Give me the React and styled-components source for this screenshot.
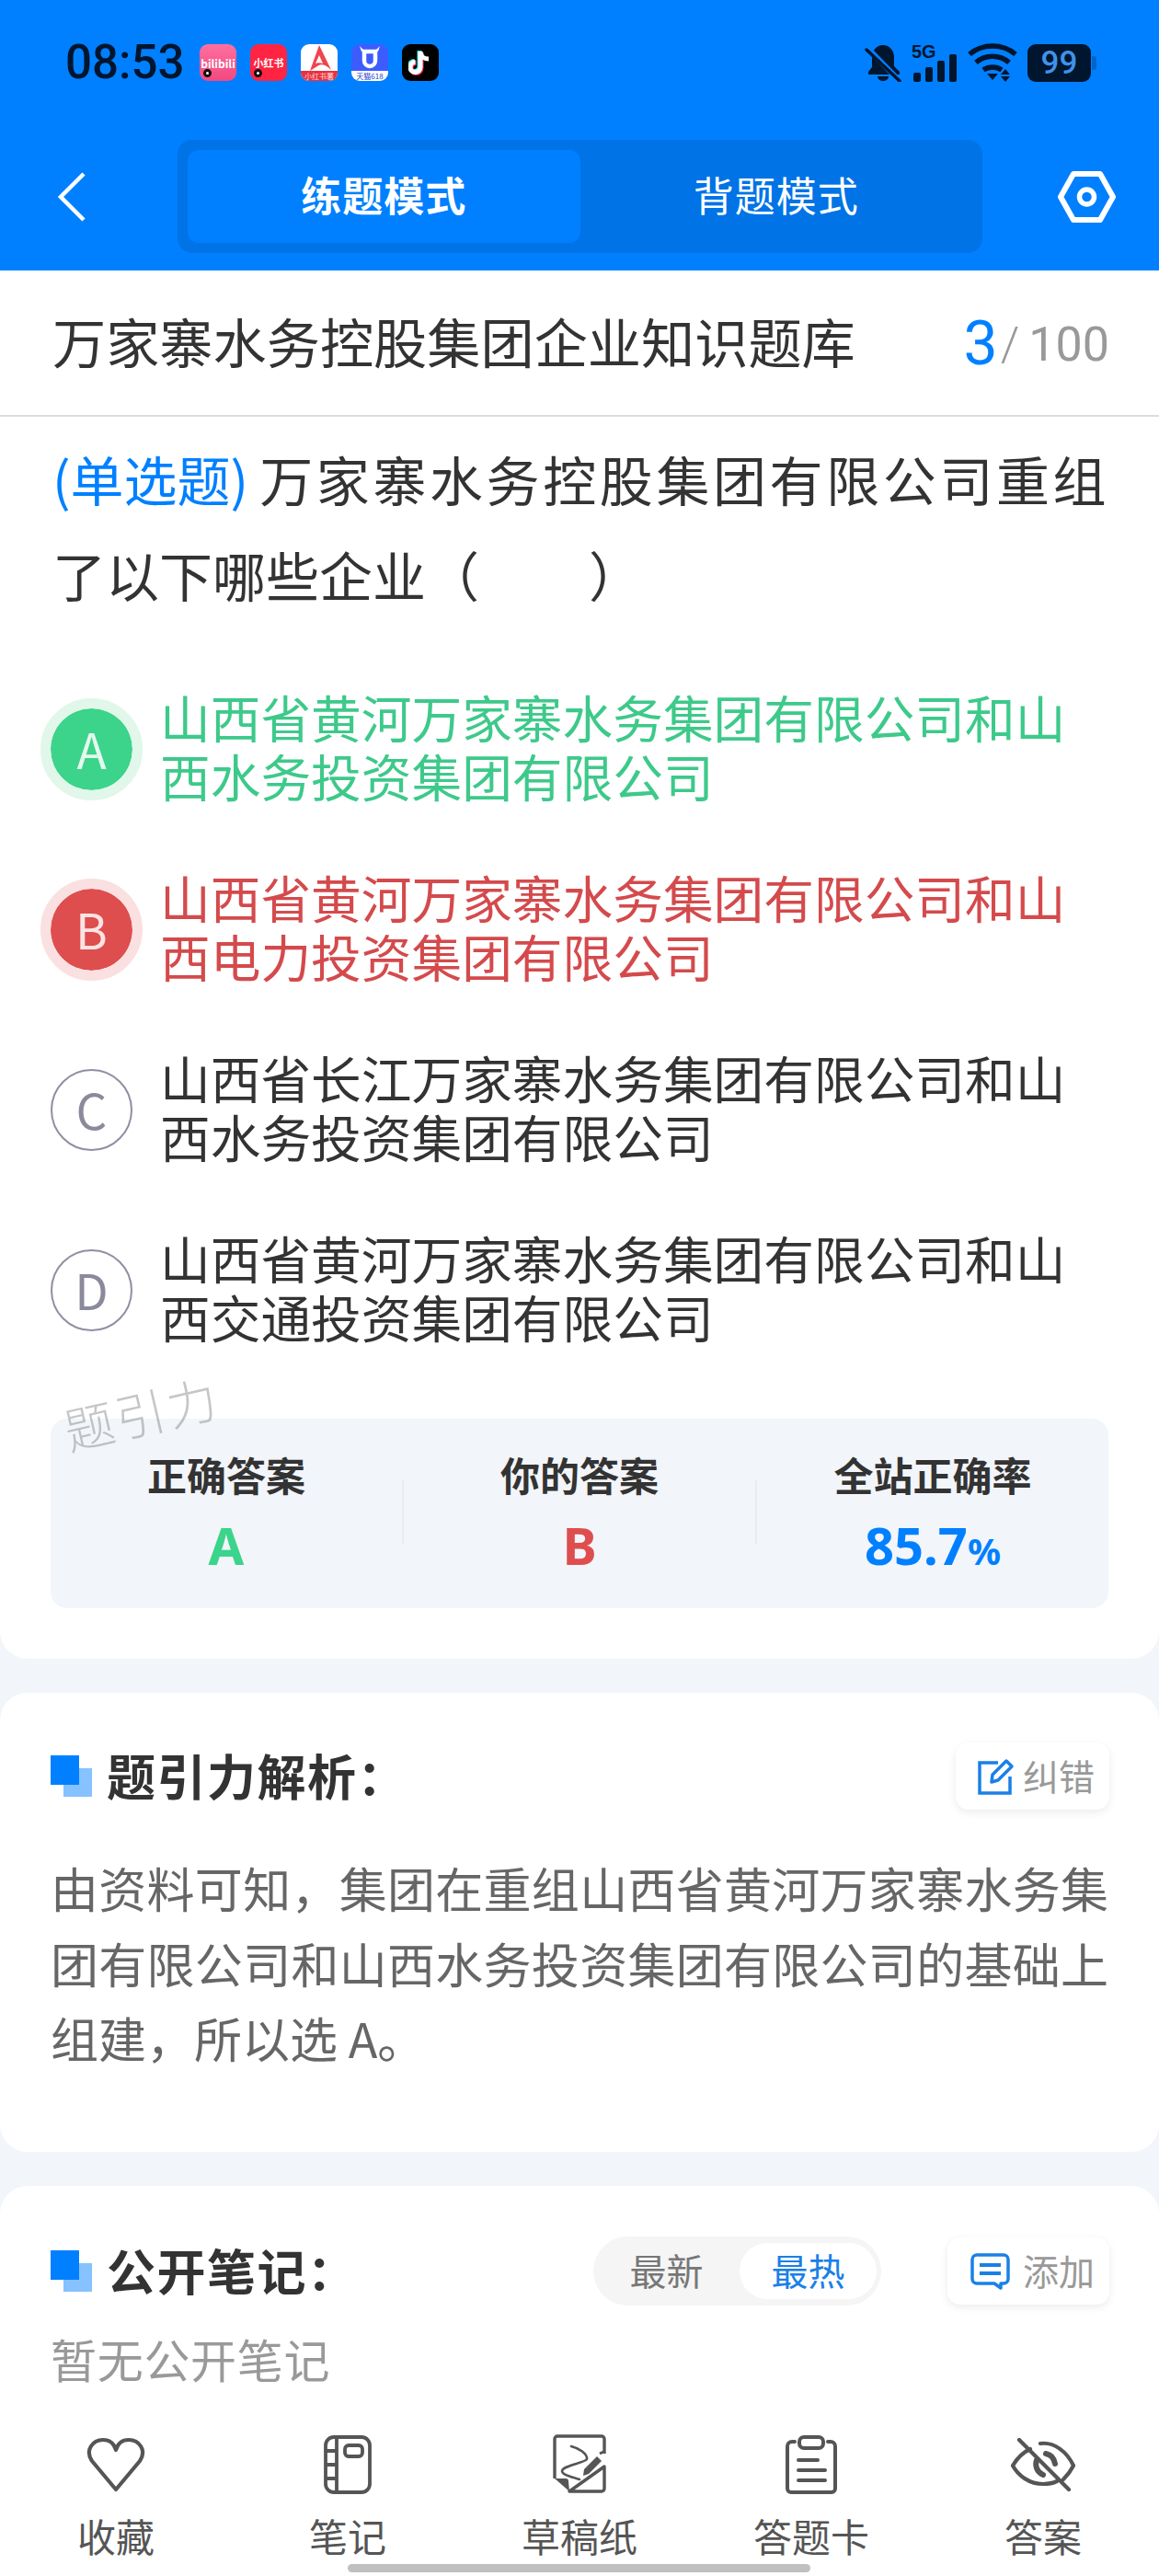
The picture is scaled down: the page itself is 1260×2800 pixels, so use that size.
import React from 'react'
import styled, { createGlobalStyle } from 'styled-components'

const FONT = `"Noto Sans CJK SC", "Noto Sans", sans-serif`
const BLUE = '#0080ff'
const GREEN = '#3bd48a'
const RED = '#de4e4f'
const STATUS_DARK = '#00152e'

const Global = createGlobalStyle`
  html, body { margin: 0; padding: 0; background: #f2f5f9; }
  * { box-sizing: border-box; }
`

const Page = styled.div`
  width: 1260px;
  height: 2800px;
  position: relative;
  overflow: hidden;
  display: flex;
  flex-direction: column;
  background: #f2f5f9;
  font-family: ${FONT};
  color: #333;
`

const Header = styled.header`
  height: 294px;
  background: ${BLUE};
  flex-shrink: 0;
`

const StatusBar = styled.div`
  height: 136px;
  padding: 0 74px 0 71px;
  display: flex;
  align-items: center;
  justify-content: space-between;
`

const StatusLeft = styled.div`
  display: flex;
  align-items: center;
`

const Time = styled.div`
  font-family: Roboto, sans-serif;
  font-size: 51px;
  font-weight: 500;
  color: ${STATUS_DARK};
  line-height: 50px;
  width: 146px;
`

const AppIcons = styled.div`
  display: flex;
  gap: 15px;
`

const AppIcon = styled.div`
  width: 40px;
  height: 40px;
  border-radius: 9px;
  position: relative;
  overflow: hidden;
  display: flex;
  align-items: center;
  justify-content: center;
  background: ${p => p.$bg};
  color: #fff;
  font-size: ${p => p.$size || 11}px;
  font-weight: 700;
  white-space: nowrap;
`

const Dot = styled.span`
  position: absolute;
  left: 4px;
  bottom: 4px;
  width: 9px;
  height: 9px;
  border-radius: 50%;
  border: 3px solid #111;
  background: #fff;
`

const AppStrip = styled.span`
  position: absolute;
  left: 0;
  right: 0;
  bottom: 0;
  height: 11px;
  line-height: 11px;
  text-align: center;
  font-size: 8px;
  font-weight: 400;
  background: ${p => p.$bg};
  color: ${p => p.$color};
`

const StatusRight = styled.div`
  display: flex;
  align-items: center;
  gap: 11px;
`

const SignalBox = styled.div`
  position: relative;
  width: 50px;
  height: 41px;
`

const FiveG = styled.span`
  position: absolute;
  left: 0;
  top: -3px;
  font-family: "Liberation Sans", sans-serif;
  font-size: 20px;
  line-height: 22px;
  font-weight: 700;
  color: ${STATUS_DARK};
`

const Battery = styled.div`
  width: 69px;
  height: 41px;
  border-radius: 9px;
  background: ${STATUS_DARK};
  color: #3f92ea;
  font-family: Roboto, sans-serif;
  font-size: 35px;
  font-weight: 500;
  line-height: 41px;
  text-align: center;
  position: relative;

  &::after {
    content: '';
    position: absolute;
    right: -6px;
    top: 13px;
    width: 5px;
    height: 15px;
    border-radius: 0 3px 3px 0;
    background: #0066cc;
  }
`

const Toolbar = styled.div`
  display: flex;
  align-items: center;
  justify-content: space-between;
  padding: 16px 47px 0 62px;
`

const ModeSwitch = styled.div`
  width: 875px;
  height: 123px;
  padding: 11px;
  border-radius: 16px;
  background: #0073e6;
  display: flex;
  margin-left: 17px;
`

const ModeTab = styled.div`
  flex: 1;
  border-radius: 12px;
  padding-bottom: 5px;
  display: flex;
  align-items: center;
  justify-content: center;
  background: ${p => (p.$active ? BLUE : 'transparent')};
  color: #fff;
  font-size: 44px;
  font-weight: ${p => (p.$active ? 700 : 400)};
  letter-spacing: 1px;
`

const WhiteCard = styled.section`
  background: #fff;
  border-radius: ${p => p.$radius || '30px'};
  flex-shrink: 0;
`

const QuestionCard = styled(WhiteCard)`
  height: 1509px;
`

const TitleRow = styled.div`
  height: 159px;
  padding: 0 54px 6px 57px;
  border-bottom: 2px solid #dcdcdc;
  display: flex;
  align-items: center;
  justify-content: space-between;
`

const BankTitle = styled.div`
  font-size: 58.2px;
  color: #333;
  white-space: nowrap;
`

const Progress = styled.div`
  display: flex;
  align-items: baseline;
  color: #999;
  font-family: Roboto, sans-serif;
  font-size: 52px;
`

const ProgressNow = styled.span`
  font-size: 66px;
  color: ${BLUE};
  transform: translate(1px, 4px);
`

const ProgressSlash = styled.span`
  margin: 0 10px 0 4px;
  font-weight: 300;
`

const Question = styled.div`
  margin: 15px 0 0;
  padding: 0 54px 0 57px;
  font-size: 58px;
  line-height: 104px;
  color: #333;
`

const QuestionLine = styled.div`
  white-space: nowrap;
  letter-spacing: ${p => (p.$spread ? '3.6px' : '0')};
`

const QuestionType = styled.span`
  color: ${BLUE};
  letter-spacing: 0;
  margin-right: 12px;
`

const Blank = styled.span`
  display: inline-block;
  width: 119px;
`

const Options = styled.div`
  margin-top: 74px;
  display: flex;
  flex-direction: column;
  gap: 68px;
`

const OptionRow = styled.div`
  display: flex;
  align-items: center;
  padding: 0 40px 0 44px;
  height: 128px;
  gap: 19px;
`

const COLORS = { right: GREEN, wrong: RED }
const TEXT_COLORS = { right: '#3dc98a', wrong: '#d44a4c' }
const RINGS = { right: '#e0f7ea', wrong: '#fae0e0' }
const LETTERS = { right: '#e4f9ee', wrong: '#fbe3e3' }

const OptionBadge = styled.div`
  width: ${p => (p.$state ? 111 : 89)}px;
  height: ${p => (p.$state ? 111 : 89)}px;
  margin: 0 ${p => (p.$state ? 0 : 11)}px;
  flex-shrink: 0;
  padding-bottom: 3px;
  border-radius: 50%;
  display: flex;
  align-items: center;
  justify-content: center;
  font-size: 53px;
  font-weight: 400;
  color: ${p => LETTERS[p.$state] || '#8a8a9c'};
  background: ${p => COLORS[p.$state] || 'transparent'};
  background-clip: padding-box;
  border: ${p => (p.$state ? `11px solid ${RINGS[p.$state]}` : '2.5px solid #8f8fa3')};
`

const OptionText = styled.div`
  font-size: 54.7px;
  line-height: 64px;
  margin-top: -6px;
  color: ${p => TEXT_COLORS[p.$state] || '#333'};
  width: 990px;
`

const Watermark = styled.div`
  position: absolute;
  left: 68px;
  top: 1495px;
  font-size: 54px;
  font-weight: 300;
  letter-spacing: 3px;
  color: rgba(120, 120, 120, 0.42);
  transform: rotate(-13deg);
  white-space: nowrap;
`

const Stats = styled.div`
  margin: 76px 55px 0;
  height: 206px;
  border-radius: 18px;
  background: #f2f5f9;
  display: flex;
`

const Stat = styled.div`
  flex: 1;
  padding-top: 37px;
  display: flex;
  flex-direction: column;
  align-items: center;
`

const StatLabel = styled.div`
  font-size: 43px;
  line-height: 46px;
  font-weight: 700;
  color: #333;
`

const StatValue = styled.div`
  margin-top: 26px;
  font-family: "Noto Sans", sans-serif;
  font-size: 56px;
  line-height: 56px;
  font-weight: 700;
  color: ${p => p.$color};
`

const Percent = styled.span`
  font-size: 40px;
`

const StatDivider = styled.div`
  width: 2px;
  height: 70px;
  margin-top: 67px;
  background: #e9edf2;
`

const AnalysisCard = styled(WhiteCard)`
  margin-top: 37px;
  height: 499px;
  padding: 54px 54px 0 55px;
`

const NotesCard = styled(WhiteCard)`
  margin-top: 37px;
  flex: 1;
  min-height: 0;
  padding: 55px 54px 0 55px;
`

const SectionHead = styled.div`
  display: flex;
  align-items: center;
  height: ${p => p.$h}px;
`

const SectionMark = styled.div`
  width: 45px;
  height: 45px;
  flex-shrink: 0;
  margin-right: 16px;
  background: linear-gradient(${BLUE}, ${BLUE}) 0 0 / 31px 32px no-repeat,
    linear-gradient(#85c2ff, #85c2ff) 14px 14px / 31px 31px no-repeat;
`

const SectionTitle = styled.div`
  font-size: 53px;
  font-weight: 700;
  color: #333;
  letter-spacing: 1.5px;
  padding-bottom: 4px;
  flex: 1;
`

const ActionButton = styled.div`
  height: ${p => p.$h}px;
  padding: 0 16px 0 ${p => p.$pl}px;
  border-radius: 14px;
  background: #fff;
  box-shadow: 0 3px 10px rgba(0, 0, 0, 0.08);
  display: flex;
  align-items: center;
  gap: ${p => p.$gap}px;
  font-size: 39px;
  line-height: 48px;
  color: #999;
`

const ActionLabel = styled.span`
  margin: -3px 0 0 0;
`

const SortSwitch = styled.div`
  width: 313px;
  height: 75px;
  margin-right: 72px;
  padding: 7px 5px 7px 0;
  border-radius: 38px;
  background: #f5f5f5;
  display: flex;
  align-items: center;
  font-size: 40px;
  color: #777;
`

const SortOption = styled.div`
  height: 61px;
  padding-bottom: 4px;
  display: flex;
  align-items: center;
  justify-content: center;
  border-radius: 31px;
  flex: ${p => (p.$active ? '0 0 149px' : '1')};
  background: ${p => (p.$active ? '#fff' : 'transparent')};
  color: ${p => (p.$active ? '#1a80e6' : '#777')};
`

const AnalysisText = styled.p`
  margin: 44px 0 0;
  font-size: 52px;
  line-height: 81.5px;
  text-align: justify;
  color: #666;
  width: 1150px;
`

const EmptyNote = styled.div`
  margin-top: 27px;
  font-size: 50px;
  line-height: 60px;
  letter-spacing: 0.7px;
  color: #999;
`

const BottomNav = styled.nav`
  height: 180px;
  flex-shrink: 0;
  padding-top: 27px;
  background: #fff;
  display: grid;
  grid-template-columns: repeat(5, 252px);
`

const NavItem = styled.div`
  display: flex;
  flex-direction: column;
  align-items: center;
  color: #555;
`

const NavIcon = styled.div`
  height: 63px;
  margin-bottom: 21px;
  display: flex;
  align-items: center;
  justify-content: center;
`

const NavLabel = styled.div`
  font-size: 42px;
  line-height: 50px;
`

const HomeBar = styled.div`
  position: absolute;
  left: 378px;
  top: 2787px;
  width: 503px;
  height: 9px;
  border-radius: 5px;
  background: #c0c0c0;
`

const BellOff = () => (
  <svg width="40" height="41" viewBox="0 0 40 41">
    <path fill={STATUS_DARK} d="M20 1c7 0 12 6 12 13v10l6 6v3H4v-3l4-5V14C8 7 13 1 20 1z" />
    <path fill={STATUS_DARK} d="M14 35h12c0 3-3 5-6 5s-6-2-6-5z" />
    <path stroke={BLUE} strokeWidth="6" d="M0 1l38 39" />
    <path stroke={STATUS_DARK} strokeWidth="3.5" strokeLinecap="round" d="M2 6l36 34" />
  </svg>
)

const SignalBars = () => (
  <svg width="48" height="30" viewBox="0 0 48 30" style={{ position: 'absolute', left: 2, bottom: 0 }}>
    <rect x="0" y="20" width="8" height="10" rx="2" fill={STATUS_DARK} />
    <rect x="13" y="14" width="8" height="16" rx="2" fill={STATUS_DARK} />
    <rect x="26" y="7" width="8" height="23" rx="2" fill={STATUS_DARK} />
    <rect x="39" y="0" width="8" height="30" rx="2" fill={STATUS_DARK} />
  </svg>
)

const Wifi = () => (
  <svg width="54" height="42" viewBox="0 0 54 42" fill="none" stroke={STATUS_DARK} strokeWidth="5.5">
    <path d="M2 12C16 0 38 0 52 12" />
    <path d="M9 21C19 12 35 12 45 21" />
    <path d="M17 29c6-4 14-4 20 0" />
    <path fill={STATUS_DARK} stroke="none" d="M21 33h12l-6 7zM41 28l5 6H36zM36 36h10l-5 6z" />
  </svg>
)

const Chevron = () => (
  <svg width="32" height="54" viewBox="0 0 32 54" fill="none">
    <path d="M29 2L4 27l25 25" stroke="#fff" strokeWidth="4.5" />
  </svg>
)

const Hexagon = () => (
  <svg width="63" height="58" viewBox="0 0 63 58" fill="none" stroke="#fff">
    <path strokeWidth="6" strokeLinejoin="round" d="M17 4h29l14 25-14 25H17L3 29z" />
    <circle cx="31.5" cy="29" r="8" strokeWidth="5.5" />
  </svg>
)

const EditIcon = () => (
  <svg width="40" height="40" viewBox="0 0 40 40" fill="none" stroke="#1a80e6" strokeWidth="3.5">
    <path d="M22 5H2v33h33V20" />
    <path strokeLinejoin="round" d="M15 26l1-8L31 3l6 6-15 15z" />
  </svg>
)

const NoteBubble = () => (
  <svg width="43" height="40" viewBox="0 0 43 40" fill="none" stroke="#1a80e6" strokeWidth="3.5">
    <path strokeLinejoin="round" d="M7 2h29a5 5 0 0 1 5 5v21a5 5 0 0 1-5 5h-3v5l-7-5H7a5 5 0 0 1-5-5V7a5 5 0 0 1 5-5z" />
    <path strokeWidth="4" d="M10 13h23M10 22h23" />
  </svg>
)

const Heart = () => (
  <svg width="66" height="60" viewBox="0 0 66 60" fill="none" stroke="#555" strokeWidth="4.2" strokeLinejoin="round">
    <path d="M33 57L7 26C-1 14 8 3 19 3c7 0 12 4 14 11 2-7 7-11 14-11 11 0 20 11 12 23z" />
  </svg>
)

const Notebook = () => (
  <svg width="52" height="64" viewBox="0 0 52 64" fill="none" stroke="#555" strokeWidth="3.8">
    <rect x="2" y="2" width="48" height="60" rx="9" />
    <path d="M14 2v60M2 17h12M2 32h12M2 47h12" />
    <rect x="23" y="11" width="19" height="12" rx="4" />
  </svg>
)

const DraftPaper = () => (
  <svg width="58" height="66" viewBox="12 12 58 66" fill="none" stroke="#555" strokeWidth="3.4">
    <path strokeLinejoin="round" d="M14 60V17a3 3 0 0 1 3-3h48a3 3 0 0 1 3 3v16M68 47v24a3 3 0 0 1-3 3H30z" />
    <path fill="#555" stroke="none" d="M14 60h12a3 3 0 0 1 3 3l1 11z" />
    <path strokeWidth="2.6" strokeLinecap="round" d="M32 25c8 2 18 8 17 14-2 4-27 7-27 13 0 4 12 7 19 9" />
    <path fill="#555" stroke="none" d="M60 36l5 5-14 14-6 2 1-7z" />
    <path strokeWidth="3" d="M63 33l4-2" />
  </svg>
)

const AnswerSheet = () => (
  <svg width="56" height="64" viewBox="0 0 56 64" fill="none" stroke="#555" strokeWidth="4" strokeLinecap="round">
    <path d="M10 7H7a5 5 0 0 0-5 5v46a4 4 0 0 0 4 4h44a4 4 0 0 0 4-4V12a5 5 0 0 0-5-5h-3" />
    <rect x="15" y="2" width="26" height="12" rx="5" />
    <path d="M14 27h21M14 38h29M14 49h29" />
  </svg>
)

const EyeOff = () => (
  <svg width="70" height="58" viewBox="0 0 70 58" fill="none" stroke="#555" strokeWidth="4.2" strokeLinecap="round">
    <path d="M21 12C10 17 5 25 2 30c6 11 18 20 33 20 6 0 11-1 15-3M32 6c15-2 29 9 36 24-3 6-7 11-11 15" />
    <path strokeWidth="6" d="M28 24c-2 6 0 13 7 16M38 17c5 1 9 5 10 11" />
    <path d="M9 2l54 54" />
  </svg>
)

const NAV_ITEMS = [
  { label: '收藏', icon: <Heart /> },
  { label: '笔记', icon: <Notebook /> },
  { label: '草稿纸', icon: <DraftPaper /> },
  { label: '答题卡', icon: <AnswerSheet /> },
  { label: '答案', icon: <EyeOff /> },
]

const OPTIONS = [
  { key: 'A', state: 'right', text: '山西省黄河万家寨水务集团有限公司和山西水务投资集团有限公司' },
  { key: 'B', state: 'wrong', text: '山西省黄河万家寨水务集团有限公司和山西电力投资集团有限公司' },
  { key: 'C', text: '山西省长江万家寨水务集团有限公司和山西水务投资集团有限公司' },
  { key: 'D', text: '山西省黄河万家寨水务集团有限公司和山西交通投资集团有限公司' },
]

export default function App() {
  return (
    <Page>
      <Global />
      <Header>
        <StatusBar>
          <StatusLeft>
            <Time>08:53</Time>
            <AppIcons>
              <AppIcon $bg="linear-gradient(#ff6f9f, #f2487f)" $size={12}>bilibili<Dot /></AppIcon>
              <AppIcon $bg="#ff2442" $size={11}>小红书<Dot /></AppIcon>
              <AppIcon $bg="#fff">
                <svg width="30" height="28" viewBox="0 0 30 28" style={{ marginTop: -10 }}>
                  <path fill="#f0444f" d="M15 0l13 27c-6-6-11-7-15-4l-8 5z" />
                  <path fill="#fff" d="M15 11l4 9c-3-1-6-1-8 0z" />
                </svg>
                <AppStrip $bg="#e8323f" $color="#ffd9dc">小红书薯</AppStrip>
              </AppIcon>
              <AppIcon $bg="#3d5cff">
                <svg width="24" height="26" viewBox="0 0 24 26" fill="none" style={{ marginTop: -10 }}>
                  <path stroke="#fff" strokeWidth="4.5" d="M6 6h12v10a6 6 0 0 1-12 0z" />
                  <path fill="#fff" d="M1 0l6 6H3zM23 0l-6 6h4z" />
                </svg>
                <AppStrip $bg="#fff" $color="#2340c8">天猫618</AppStrip>
              </AppIcon>
              <AppIcon $bg="#000">
                <svg width="26" height="30" viewBox="0 0 26 30" fill="none">
                  <path stroke="#25f4ee" strokeWidth="5" d="M13 3v17a5.500 5.500 0 1 1-5.500-5.500" transform="translate(-1 -1)" />
                  <path stroke="#fe2c55" strokeWidth="5" d="M13 3v17a5.500 5.500 0 1 1-5.500-5.500" transform="translate(1 1)" />
                  <path stroke="#fff" strokeWidth="5" d="M13 3v17a5.500 5.500 0 1 1-5.500-5.500M13 3c0 5 4 8 9 8" />
                </svg>
              </AppIcon>
            </AppIcons>
          </StatusLeft>
          <StatusRight>
            <BellOff />
            <SignalBox>
              <FiveG>5G</FiveG>
              <SignalBars />
            </SignalBox>
            <Wifi />
            <Battery>99</Battery>
          </StatusRight>
        </StatusBar>
        <Toolbar>
          <Chevron />
          <ModeSwitch>
            <ModeTab $active>练题模式</ModeTab>
            <ModeTab>背题模式</ModeTab>
          </ModeSwitch>
          <Hexagon />
        </Toolbar>
      </Header>

      <QuestionCard $radius="0 0 30px 30px">
        <TitleRow>
          <BankTitle>万家寨水务控股集团企业知识题库</BankTitle>
          <Progress>
            <ProgressNow>3</ProgressNow>
            <ProgressSlash>/</ProgressSlash>
            100
          </Progress>
        </TitleRow>
        <Question>
          <QuestionLine $spread>
            <QuestionType>(单选题)</QuestionType>
            万家寨水务控股集团有限公司重组
          </QuestionLine>
          <QuestionLine>了以下哪些企业（<Blank />）</QuestionLine>
        </Question>
        <Options>
          {OPTIONS.map(o => (
            <OptionRow key={o.key}>
              <OptionBadge $state={o.state}>{o.key}</OptionBadge>
              <OptionText $state={o.state}>{o.text}</OptionText>
            </OptionRow>
          ))}
        </Options>
        <Stats>
          <Stat>
            <StatLabel>正确答案</StatLabel>
            <StatValue $color={GREEN}>A</StatValue>
          </Stat>
          <StatDivider />
          <Stat>
            <StatLabel>你的答案</StatLabel>
            <StatValue $color={RED}>B</StatValue>
          </Stat>
          <StatDivider />
          <Stat>
            <StatLabel>全站正确率</StatLabel>
            <StatValue $color={BLUE}>85.7<Percent>%</Percent></StatValue>
          </Stat>
        </Stats>
      </QuestionCard>
      <Watermark>题引力</Watermark>

      <AnalysisCard>
        <SectionHead $h={73}>
          <SectionMark />
          <SectionTitle>题引力解析：</SectionTitle>
          <ActionButton $h={73} $pl={24} $gap={9}>
            <EditIcon />
            <ActionLabel>纠错</ActionLabel>
          </ActionButton>
        </SectionHead>
        <AnalysisText>
          由资料可知，集团在重组山西省黄河万家寨水务集团有限公司和山西水务投资集团有限公司的基础上组建，所以选 A。
        </AnalysisText>
      </AnalysisCard>

      <NotesCard $radius="30px 30px 0 0">
        <SectionHead $h={75}>
          <SectionMark />
          <SectionTitle>公开笔记：</SectionTitle>
          <SortSwitch>
            <SortOption>最新</SortOption>
            <SortOption $active>最热</SortOption>
          </SortSwitch>
          <ActionButton $h={73} $pl={25} $gap={14}>
            <NoteBubble />
            <ActionLabel>添加</ActionLabel>
          </ActionButton>
        </SectionHead>
        <EmptyNote>暂无公开笔记</EmptyNote>
      </NotesCard>

      <BottomNav>
        {NAV_ITEMS.map(item => (
          <NavItem key={item.label}>
            <NavIcon>{item.icon}</NavIcon>
            <NavLabel>{item.label}</NavLabel>
          </NavItem>
        ))}
      </BottomNav>
      <HomeBar />
    </Page>
  )
}
